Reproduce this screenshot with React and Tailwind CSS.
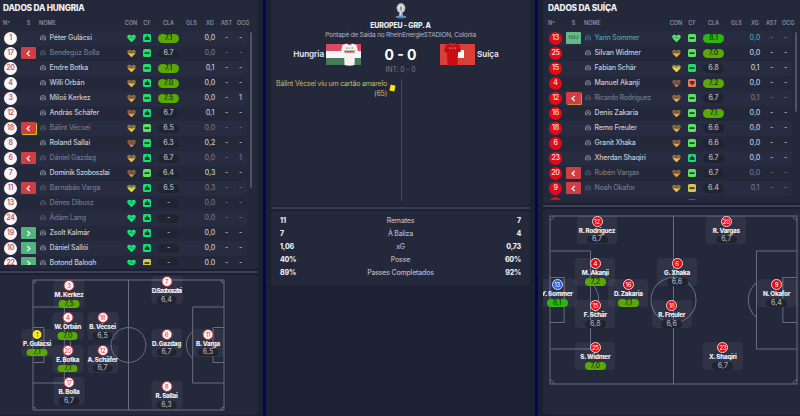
import React from "react";

// n: number, s: status, con: heart colour, lvl: how empty the heart is, cf: form badge
const hungary = [
    { n: 1, name: "Péter Gulácsi", con: "#2fe574", lvl: 0, cf: "up", cla: "7.1", xg: "0,0", ocg: "-" },
    { n: 17, s: "out", name: "Bendegúz Bolla", con: "#f2bd45", lvl: 8, cf: "mid", cla: "6.7", xg: "0,0", ocg: "-" },
    { n: 20, name: "Endre Botka", con: "#f2bd45", lvl: 8, cf: "mid", cla: "7.1", xg: "0,1", ocg: "-" },
    { n: 4, name: "Willi Orbán", con: "#f2b545", lvl: 8, cf: "up", cla: "7.0", xg: "0,0", ocg: "-" },
    { n: 3, name: "Miloš Kerkez", con: "#f0a545", lvl: 9, cf: "mid", cla: "7.5", xg: "0,0", ocg: "1" },
    { n: 12, name: "András Schäfer", con: "#ee9a48", lvl: 9, cf: "up", cla: "6.7", xg: "0,1", ocg: "-" },
    { n: 18, s: "booked", name: "Bálint Vécsei", con: "#f2bd45", lvl: 8, cf: "ok", cla: "6.5", xg: "0,0", ocg: "-" },
    { n: 8, name: "Roland Sallai", con: "#ee9348", lvl: 12, cf: "mid", cla: "6.3", xg: "0,2", ocg: "-" },
    { n: 6, s: "out", name: "Dániel Gazdag", con: "#f2bd45", lvl: 8, cf: "up", cla: "6.7", xg: "0,0", ocg: "1" },
    { n: 7, name: "Dominik Szoboszlai", con: "#ee9348", lvl: 11, cf: "ok", cla: "6.4", xg: "0,3", ocg: "-" },
    { n: 11, s: "out", name: "Barnabás Varga", con: "#dedb4b", lvl: 6, cf: "up", cla: "6.5", xg: "0,3", ocg: "-" },
    { n: 13, dim: true, name: "Dénes Dibusz", con: "#12e874", lvl: 0, cf: "up", cla: "-", xg: "0,0", ocg: "-" },
    { n: 24, dim: true, name: "Ádám Lang", con: "#12e874", lvl: 0, cf: "up", cla: "-", xg: "0,0", ocg: "-" },
    { n: 19, s: "in", name: "Zsolt Kalmár", con: "#12e874", lvl: 0, cf: "up", cla: "-", xg: "0,0", ocg: "-" },
    { n: 10, s: "in", name: "Dániel Sallói", con: "#12e874", lvl: 0, cf: "up", cla: "-", xg: "0,0", ocg: "-" },
    { n: 22, s: "in", name: "Botond Balogh", con: "#12e874", lvl: 0, cf: "low", cla: "-", xg: "0,0", ocg: "-" },
];

const swiss = [
    { n: 13, s: "best", name: "Yann Sommer", con: "#5be36c", lvl: 0, cf: "ok", cla: "8.1", xg: "0,0", ocg: "-" },
    { n: 25, name: "Silvan Widmer", con: "#f0ad45", lvl: 8, cf: "ok", cla: "7.0", xg: "0,0", ocg: "-" },
    { n: 15, name: "Fabian Schär", con: "#eed845", lvl: 5, cf: "mid", cla: "6.8", xg: "0,1", ocg: "-" },
    { n: 4, name: "Manuel Akanji", con: "#e88a4c", lvl: 12, cf: "down", cla: "7.2", xg: "0,0", ocg: "-" },
    { n: 12, s: "warned", name: "Ricardo Rodríguez", con: "#f0a545", lvl: 9, cf: "ok", cla: "6.7", xg: "0,1", ocg: "-" },
    { n: 16, name: "Denis Zakaria", con: "#f0a045", lvl: 9, cf: "ok", cla: "7.1", xg: "0,0", ocg: "-" },
    { n: 18, name: "Remo Freuler", con: "#f0a545", lvl: 9, cf: "ok", cla: "6.6", xg: "0,0", ocg: "-" },
    { n: 6, name: "Granit Xhaka", con: "#ee9f48", lvl: 9, cf: "ok", cla: "6.6", xg: "0,0", ocg: "-" },
    { n: 23, name: "Xherdan Shaqiri", con: "#f2bd45", lvl: 8, cf: "up", cla: "6.7", xg: "0,0", ocg: "-" },
    { n: 20, s: "out", name: "Rubén Vargas", con: "#f0a045", lvl: 9, cf: "ok", cla: "6.7", xg: "0,0", ocg: "-" },
    { n: 9, s: "out", name: "Noah Okafor", con: "#f2bd45", lvl: 8, cf: "low", cla: "6.4", xg: "0,1", ocg: "-" },
];

// x, y are the middle of the shirt number, inside the pitch panel
const hungaryPins = [
    { n: 3, name: "M. Kerkez", r: "7,5", x: 69, y: 10.3 },
    { n: 4, name: "W. Orbán", r: "7,0", x: 67.7, y: 42.7 },
    { n: 18, name: "B. Vécsei", r: "6,5", x: 102.5, y: 42.7 },
    { n: 1, name: "P. Gulácsi", r: "7,1", x: 37, y: 59, keeper: true },
    { n: 20, name: "E. Botka", r: "7,1", x: 67.7, y: 75 },
    { n: 12, name: "A. Schäfer", r: "6,7", x: 102.5, y: 75 },
    { n: 17, name: "B. Bolla", r: "6,7", x: 69, y: 107.7 },
    { n: 7, name: "D. Szoboszlai", r: "6,4", x: 166.5, y: 6.7, tight: true },
    { n: 6, name: "D. Gazdag", r: "6,7", x: 166.5, y: 59 },
    { n: 8, name: "R. Sallai", r: "6,3", x: 166.5, y: 111.3 },
    { n: 11, name: "B. Varga", r: "6,5", x: 208, y: 59 },
];

const swissPins = [
    { n: 12, name: "R. Rodríguez", r: "6,7", x: 54, y: 12 },
    { n: 20, name: "R. Vargas", r: "6,7", x: 183.3, y: 12 },
    { n: 4, name: "M. Akanji", r: "7,2", x: 52.3, y: 54.3 },
    { n: 6, name: "G. Xhaka", r: "6,6", x: 134, y: 54.3 },
    { n: 13, name: "Y. Sommer", r: "8,1", x: 14, y: 75.3, keeper: true },
    { n: 16, name: "D. Zakaria", r: "7,1", x: 85.3, y: 75.3 },
    { n: 9, name: "N. Okafor", r: "6,4", x: 233.5, y: 75.3 },
    { n: 15, name: "F. Schär", r: "6,8", x: 52.3, y: 96.3 },
    { n: 18, name: "R. Freuler", r: "6,6", x: 128.7, y: 96.3 },
    { n: 25, name: "S. Widmer", r: "7,0", x: 52.3, y: 138.7 },
    { n: 23, name: "X. Shaqiri", r: "6,7", x: 179.8, y: 138.7 },
];

const stats = [
    ["11", "Remates", "7"],
    ["7", "À Baliza", "4"],
    ["1,06", "xG", "0,73"],
    ["40%", "Posse", "60%"],
    ["89%", "Passes Completados", "92%"],
];

const cols = "grid grid-cols-[15px_21px_10.5px_73.5px_16px_16px_27px_19px_18px_15px_13px] items-center";

function ratingColor(r) {
    const v = parseFloat(r.replace(",", "."));
    if (v >= 8) return "bg-[#2bb80c] text-[#0f450a]";
    if (v >= 7) return "bg-[#5aa805] text-[#1c3a0a]";
    return "bg-[#202430] text-[#a9abb4]";
}

function Heart({ color, level }) {
    const d = "M9 16 2 9C-1 5 1 1 4.600 1 6.800 1 8.200 2.200 9 3.600 9.800 2.200 11.200 1 13.400 1 17 1 19 5 16 9Z";
    return (
        <svg viewBox="0 0 18 17" className="h-[9px] w-[9px]">
            <path d={ d } fill={ color } opacity={ level ? 0.5 : 1 }/>
            { level > 0 && <path d={ d } fill={ color } style={{ clipPath: `inset(${ level - 1 }px 0 0 0)` }}/> }
            <path d="M3.500 7h3l1.500-2 2 4 1.500-2h3" fill="none" stroke="#24283b" strokeWidth="1.200" opacity=".5"/>
        </svg>
    )
}

function Form({ kind }) {
    const fill = { up: "#12e374", mid: "#24dc66", ok: "#5be360", low: "#dcc54b", down: "#f0785a" }[kind];
    return (
        <svg viewBox="0 0 16 16" className="size-2">
            <rect width="16" height="16" rx="3" fill={ fill }/>
            { kind === "up" && <path d="M3.500 7h2.500l2-4h2v3.500h3V12H6l-2.500-.5z" fill="#15332f"/> }
            { kind === "down" && <path d="M3.500 9h2.500l2 4h2V9.500h3V4H6l-2.500.5z" fill="#4d2a2f"/> }
            { (kind === "mid" || kind === "ok" || kind === "low") && <rect x="3" y="6.500" width="10" height="3.500" fill="#1f4536"/> }
        </svg>
    )
}

function Chevron({ right }) {
    return (
        <svg viewBox="0 0 10 10" className="size-[7px]">
            <path d={ right ? "M3.200 1.500 7 5 3.200 8.500" : "M6.800 1.500 3 5l3.800 3.500" } fill="none" stroke="#f6eeee" strokeWidth="1.900"/>
        </svg>
    )
}

function Status({ s }) {
    if (!s) return <div/>;
    const base = "flex items-center justify-center justify-self-center h-3 w-[15.500px] rounded-[1px]";
    if (s === "best") return <div className={ `${ base } bg-[#65b98b] text-[5px] font-bold text-[#34745a]` }>HdJ</div>;
    if (s === "in") return <div className={ `${ base } bg-[#50b47c]` }><Chevron right/></div>;
    const card = s === "booked" ? "shadow-[1px_1px_0_#cfc51f]" : s === "warned" ? "shadow-[1px_1px_0_#cf8a3c]" : "";
    return <div className={ `${ base } bg-[#d03e43] ${ card }` }><Chevron/></div>;
}

function Row({ p, i, red }) {
    const dim = p.dim || p.s === "out" || p.s === "booked" || p.s === "warned";
    const tone = p.s === "best" ? "text-[#43a0b4]" : dim ? "text-[#737686]" : "text-[#c6c8d1]";
    const badge = red ? "bg-[#e30b17] text-[#f6d5d8]" : "bg-[#faf8f9] text-[#cc4f5c]";
    return (
        <div className={ `${ cols } h-[15px] rounded-[2px] text-[7px] font-medium ${ tone } ${ i % 2 ? "" : "bg-[#282c40]" }` }>
            <div className={ `flex size-[13px] items-center justify-center justify-self-center rounded-full text-[7px] tracking-[-0.300px] font-semibold ${ badge }` }>{ p.n }</div>
            <Status s={ p.s }/>
            <svg viewBox="0 0 12 12" className="ml-px size-[6px]" fill="none" stroke="currentColor" strokeWidth="1.500" opacity=".75">
                <path d="M1 10V6a5 5 0 0 1 10 0v4M4 11V6.500a2 2 0 0 1 4 0V11"/>
            </svg>
            <div className={ `whitespace-nowrap ${ p.name.length > 16 ? "tracking-[-0.300px]" : "tracking-[-0.160px]" }` }>{ p.name }</div>
            <div className="justify-self-center"><Heart color={ p.con } level={ p.lvl }/></div>
            <div className="justify-self-center"><Form kind={ p.cf }/></div>
            <div className={ `flex h-[9px] w-[20.500px] items-center justify-center justify-self-center rounded-full font-semibold tracking-[-0.100px] ${ ratingColor(p.cla) }` }>{ p.cla }</div>
            <div/>
            <div className="text-center">{ p.xg }</div>
            <div className="text-center">-</div>
            <div className="text-center">{ p.ocg }</div>
        </div>
    )
}

function Squad({ title, players, red, height, bar, children }) {
    return (
        <div className="pt-[2px]">
            <div className="h-[12px] whitespace-nowrap text-[8.300px] font-extrabold leading-[12px] tracking-[-0.200px] text-[#f0f1f5]">{ title }</div>
            <div className={ `${ cols } mt-[4px] mb-[2.500px] h-[10px] text-center text-[5.500px] font-semibold text-[#8a8d9b]` }>
                <div className="text-left">Nº</div>
                <div>S</div>
                <div className="col-span-2 text-left">NOME</div>
                <div>CON</div>
                <div>CF</div>
                <div>CLA</div>
                <div>GLS</div>
                <div>XG</div>
                <div>AST</div>
                <div className="pl-[3px]">OCG</div>
            </div>
            <div className={ `flex overflow-hidden ${ height }` }>
                <div>
                    { players.map((p, i) => <Row key={ p.name } p={ p } i={ i } red={ red }/>) }
                    { children }
                </div>
                <div className={ `ml-[3px] mt-[1.500px] w-[2px] rounded-full bg-[#50535f] ${ bar }` }/>
            </div>
        </div>
    )
}

// the next row, scrolled almost out of view
function RowEdge() {
    return (
        <div className={ `${ cols } h-[15px]` }>
            <div className="size-[13px] justify-self-center rounded-full bg-[#e30b17]"/>
            <div className="col-span-3"/>
            <div className="justify-self-center"><Heart color="#1c9a62" level={ 0 }/></div>
            <div className="size-2 justify-self-center rounded-[2px] bg-[#5c6248]"/>
        </div>
    )
}

function Field({ className }) {
    return (
        <svg viewBox="0 0 192 130" preserveAspectRatio="none" className={ `overflow-visible ${ className }` } fill="none" stroke="#696c7c">
            <g>
                <path vectorEffect="non-scaling-stroke" d="M0 0H192V130H0ZM96 0V130"/>
                <path vectorEffect="non-scaling-stroke" d="M0 27H31.500V103H0M0 47.500H11V82.500H0M192 27H160.500V103H192M192 47.500H181V82.500H192"/>
                <path vectorEffect="non-scaling-stroke" d="M31.500 51.500a17.500 17.500 0 0 1 0 27M160.500 51.500a17.500 17.500 0 0 0 0 27"/>
                <circle vectorEffect="non-scaling-stroke" cx="96" cy="65" r="17.500"/>
                <path vectorEffect="non-scaling-stroke" d="M3 0a3 3 0 0 1-3 3M189 0a3 3 0 0 0 3 3M0 127a3 3 0 0 1 3 3M192 127a3 3 0 0 0-3 3"/>
            </g>
        </svg>
    )
}

function Pin({ p, red }) {
    const badge = red
        ? (p.keeper ? "bg-[#1f63f0] border-[#d5dcf0] text-white" : "bg-[#e30b17] border-[#ecd5da] text-white")
        : (p.keeper ? "bg-[#f7e733] border-[#22242c] text-[#5c5620]" : "bg-[#fdf5f6] border-[#c9303e] text-[#c9303e]");
    return (
        <div
            className={ `absolute flex h-[28px] -translate-x-1/2 flex-col items-center rounded-[4px] bg-white/5 ${ red ? "w-[40px]" : "w-[31px]" }` }
            style={{ left: p.x, top: p.y - 5.3 }}
        >
            <div className={ `flex size-[11px] shrink-0 items-center justify-center rounded-full border text-[6px] tracking-[-0.300px] ${ badge }` }>{ p.n }</div>
            <div className={ `h-[9px] whitespace-nowrap text-[6.300px] font-extrabold leading-[9px] text-[#eceef3] ${ p.tight ? "tracking-[-0.950px]" : "tracking-[-0.250px]" }` }>{ p.name }</div>
            <div className={ `flex h-[7.500px] shrink-0 items-center justify-center rounded-full text-[7px] font-medium ${ red ? "w-[21px]" : "w-[20.500px]" } ${ ratingColor(p.r) }` }>{ p.r }</div>
        </div>
    )
}

function Shirt({ red, className }) {
    const main = red ? "#c80d15" : "#f4f1f0";
    return (
        <svg viewBox="0 0 34 46" className={ className }>
            <path d="M11 1 3 4 0 17l6 2 1 25q10 3 20 0l1-25 6-2L31 4 23 1q-6 4-12 0Z" fill={ main }/>
            <path d="M7 19 6 12M27 19l1-7" stroke={ red ? "#8e0b12" : "#c9c5c5" } strokeWidth="1"/>
            { !red && <path d="M7 16.500h20" stroke="#3f9a76" strokeWidth="3"/> }
            { !red && <path d="M7 19h20" stroke="#d87d78" strokeWidth="2"/> }
            <path d="M11 1q6 5 12 0" fill="none" stroke={ red ? "#eb4a50" : "#c43d47" } strokeWidth="1.500"/>
            <path d="M10 10h3M16 10h2M21 10h3" stroke={ red ? "#f08b8b" : "#b98a4a" } strokeWidth="2.500"/>
        </svg>
    )
}

function Trophy() {
    return (
        <svg viewBox="0 0 36 48" className="h-[16px] w-3">
            <path d="M13 27h10l2 14H11z" fill="#6fa6d6"/>
            <path d="M15 28h3v12h-4z" fill="#d5e7f5"/>
            <path d="M1 41q17-7 34 0l-4 3H5z" fill="#6f9fd0"/>
            <path d="M9 45h18" stroke="#3f70a8" strokeWidth="3"/>
            <ellipse cx="18" cy="15" rx="13" ry="14" fill="#e9ecee"/>
            <ellipse cx="18" cy="14" rx="9.500" ry="10.500" fill="none" stroke="#4fa26b" strokeWidth="3" strokeDasharray="5 6"/>
            <ellipse cx="18" cy="14" rx="9.500" ry="10.500" fill="none" stroke="#e0763f" strokeWidth="3" strokeDasharray="3 8" strokeDashoffset="-6"/>
            <path d="M15.500 10h5l1 8-3.500 5-3.500-5z" fill="#5586ad"/>
            <path d="M18 10v9" stroke="#f0d55c" strokeWidth="2"/>
        </svg>
    )
}

function Match() {
    return (
        <div className="flex h-[205.500px] flex-col items-center rounded-b-[4px] bg-[#24283b] pt-[3px]">
            <Trophy/>
            <div className="mt-[2px] h-[9px] text-[7px] font-extrabold leading-[9px] tracking-[-0.150px] text-[#eef0f4]">EUROPEU - GRP. A</div>
            <div className="h-[10px] whitespace-nowrap text-[6.500px] leading-[10px] tracking-[-0.220px] text-[#b3b6c2]">Pontapé de Saída no RheinEnergieSTADION, Colónia</div>
            <div className="mt-[3px] flex h-[22px] items-center">
                <div className="w-[53px] text-right text-[8.200px] font-semibold tracking-[-0.100px] text-[#e5e7ee]">Hungria</div>
                <div className="ml-[2px] flex h-[21px] w-[35px] items-center justify-center bg-[linear-gradient(#d84b62_33%,#f5f5f5_33%_66%,#477a58_66%)] pl-3">
                    <Shirt className="h-[23px] w-[17px] shrink-0"/>
                </div>
                <div className="w-[79px] text-center text-[14px] font-bold text-white">0 - 0</div>
                <div className="flex h-[21px] w-[35px] items-center bg-[#da3f38] pl-[3px]">
                    <Shirt red className="relative z-10 h-[23px] w-[19px] shrink-0"/>
                    <div className="-ml-[5px] h-[8px] w-[7px] bg-white"/>
                </div>
                <div className="ml-[2px] w-[53px] text-[8.200px] font-semibold tracking-[-0.100px] text-[#e5e7ee]">Suíça</div>
            </div>
            <div className="h-[10px] text-[7px] leading-[10px] tracking-[-0.150px] text-[#777a89]">INT: 0 - 0</div>
            <div className="mt-[4px] flex h-[122px] w-full">
                <div className="flex w-[116px] flex-col items-end whitespace-nowrap text-[7px] leading-[9.500px] tracking-[-0.200px] text-[#c5bd67]">
                    <div>Bálint Vécsei viu um cartão amarelo</div>
                    <div>(65)</div>
                </div>
                <div className="ml-[3px] mt-[6px] h-[6px] w-[4.500px] rotate-12 bg-[#f6e40e]"/>
                <div className="ml-[6px] w-px bg-[#444858]"/>
            </div>
        </div>
    )
}

export default function App() {
    return (
        <div className="flex h-[416px] w-[800px] overflow-hidden bg-[#1c2034] font-[Inter,'Liberation_Sans',sans-serif]">
            <div className="w-[258px]">
                <div className="h-[268.500px] rounded-br-[4px] bg-[#24283b] pl-[3px]">
                    <Squad title="DADOS DA HUNGRIA" players={ hungary } height="h-[234.500px]" bar="h-[156px]"/>
                </div>
                <div className="my-[2px] h-[2px] bg-[#3b3f51]"/>
                <div className="relative mt-[2.500px] h-[140px] overflow-hidden rounded-r-[4px] bg-[#24283b] pl-[32.500px] pt-[4.500px]">
                    <Field className="h-[130px] w-[191px]"/>
                    { hungaryPins.map(p => <Pin key={ p.n } p={ p }/>) }
                </div>
            </div>
            <div className="ml-[5px] w-[3px] bg-[#03074f]"/>
            <div className="ml-[5px] w-[259px]">
                <Match/>
                <div className="my-[1.500px] h-[2px] bg-[#393d50]"/>
                <div className="mt-[2px] flex h-[75px] flex-col rounded-[4px] bg-[#24283b] px-[9px] pt-[4px]">
                    { stats.map(([home, label, away]) => (
                        <div key={ label } className="flex h-[12.850px] items-center justify-between text-[7px] font-extrabold tracking-[-0.200px] text-[#e8eaf0]">
                            <div className="w-10">{ home }</div>
                            <div className="font-medium text-[#b3b6c2]">{ label }</div>
                            <div className="w-10 text-right">{ away }</div>
                        </div>
                    )) }
                </div>
            </div>
            <div className="ml-[5px] w-[3px] bg-[#03074f]"/>
            <div className="ml-[5px] w-[257px]">
                <div className="h-[203px] rounded-bl-[4px] bg-[#24283b] pl-[5px]">
                    <Squad title="DADOS DA SUÍÇA" players={ swiss } red height="h-[169px]" bar="h-[80px]">
                        <RowEdge/>
                    </Squad>
                </div>
                <div className="my-[2px] h-[2px] bg-[#3b3f51]"/>
                <div className="relative h-[206px] overflow-hidden rounded-l-[4px] bg-[#24283b] pl-[6.500px] pt-[6.500px]">
                    <Field className="h-[168px] w-[247px]"/>
                    { swissPins.map(p => <Pin key={ p.n } p={ p } red/>) }
                </div>
            </div>
        </div>
    )
}
